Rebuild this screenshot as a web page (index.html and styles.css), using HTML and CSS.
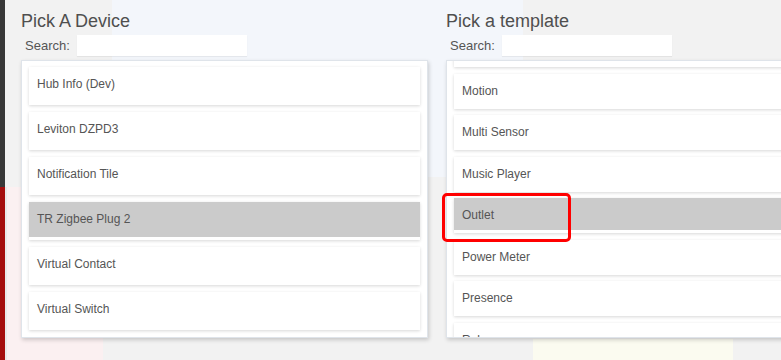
FILE: index.html
```html
<!DOCTYPE html>
<html lang="en">
<head>
  <meta charset="UTF-8">
  <meta name="viewport" content="width=device-width, initial-scale=1.0">
  <title>Pick a device</title>
  <link rel="stylesheet" href="styles.css">
</head>
<body>

<div class="picker">
  <div class="column">
    <h2>Pick A Device</h2>
    <div class="search">
      <label for="dev-search">Search:</label>
      <input type="text" id="dev-search">
    </div>
    <div class="panel">
      <div class="list">
        <div class="item">Hub Info (Dev)</div>
        <div class="item">Leviton DZPD3</div>
        <div class="item">Notification Tile</div>
        <div class="item selected">TR Zigbee Plug 2</div>
        <div class="item">Virtual Contact</div>
        <div class="item">Virtual Switch</div>
      </div>
    </div>
  </div>

  <div class="column">
    <h2>Pick a template</h2>
    <div class="search">
      <label for="tpl-search">Search:</label>
      <input type="text" id="tpl-search">
    </div>
    <div class="panel">
      <div class="list templates">
        <div class="item">Lock</div>
        <div class="item">Motion</div>
        <div class="item">Multi Sensor</div>
        <div class="item">Music Player</div>
        <div class="item selected">Outlet</div>
        <div class="item">Power Meter</div>
        <div class="item">Presence</div>
        <div class="item">Relay</div>
        <div class="item">Scene</div>
      </div>
    </div>
    <div class="highlight"></div>
  </div>
</div>

</body>
</html>
```

FILE: styles.css
```css
html, body { height: 100%; }

body {
  margin: 0;
  overflow: hidden;
  font-family: "Liberation Sans", Arial, sans-serif;
  color: #555;
  background-color: #f2f2f2;
  background-image:
    linear-gradient(#383838, #383838),
    linear-gradient(#a50d0d, #a50d0d),
    linear-gradient(#e9e9e9, #e9e9e9),
    linear-gradient(#fbf0f1, #fbf0f1),
    linear-gradient(#f3f6fb, #f3f6fb),
    linear-gradient(#fbfbf0, #fbfbf0);
  background-repeat: no-repeat;
  background-size:
    5px 187px,
    5px 173px,
    2px 173px,
    96px 173px,
    411px 177px,
    200px 21px;
  background-position:
    0 0,
    0 187px,
    5px 187px,
    7px 187px,
    112px 0,
    533px 339px;
}

.picker {
  display: flex;
  gap: 18px;
  padding: 11px 0 0 21px;
}

.column {
  position: relative;
  flex: 0 0 407px;
}

h2 {
  margin: 0;
  font-size: 18px;
  font-weight: normal;
  line-height: 20px;
  color: #4f4f4f;
  white-space: nowrap;
}

.search {
  display: flex;
  align-items: center;
  gap: 7px;
  margin: 4px 0 4px 4px;
  font-size: 13px;
}

.search label {
  flex-shrink: 0;
  white-space: nowrap;
}

.search input {
  flex: 0 0 170px;
  width: 170px;
  height: 21px;
  box-sizing: border-box;
  border: none;
  background: #fff;
  box-shadow: 0 1px 1px rgba(0, 0, 0, 0.06);
  outline: none;
}

.panel {
  height: 278px;
  box-sizing: border-box;
  border: 1px solid #dfe4ea;
  background: #fff;
  box-shadow: 1px 2px 4px rgba(0, 0, 0, 0.18);
  padding: 6px 7px 0;
  overflow: hidden;
}

.item {
  height: 38px;
  box-sizing: border-box;
  margin-bottom: 7px;
  padding: 10px 8px 0;
  font-size: 12px;
  line-height: 14px;
  background: #fff;
  box-shadow: 0 1px 3px rgba(0, 0, 0, 0.16);
  cursor: pointer;
}

.item.selected {
  background: #cbcbcb;
  border-bottom: 3px solid #fff;
}

.templates { margin-top: -35px; }

.templates .item {
  height: 35px;
  margin-bottom: 6.5px;
}

/* red annotation around the chosen template */
.highlight {
  position: absolute;
  left: -4px;
  top: 182px;
  width: 129px;
  height: 49px;
  box-sizing: border-box;
  border: 3px solid #f00;
  border-radius: 5px;
}
```
